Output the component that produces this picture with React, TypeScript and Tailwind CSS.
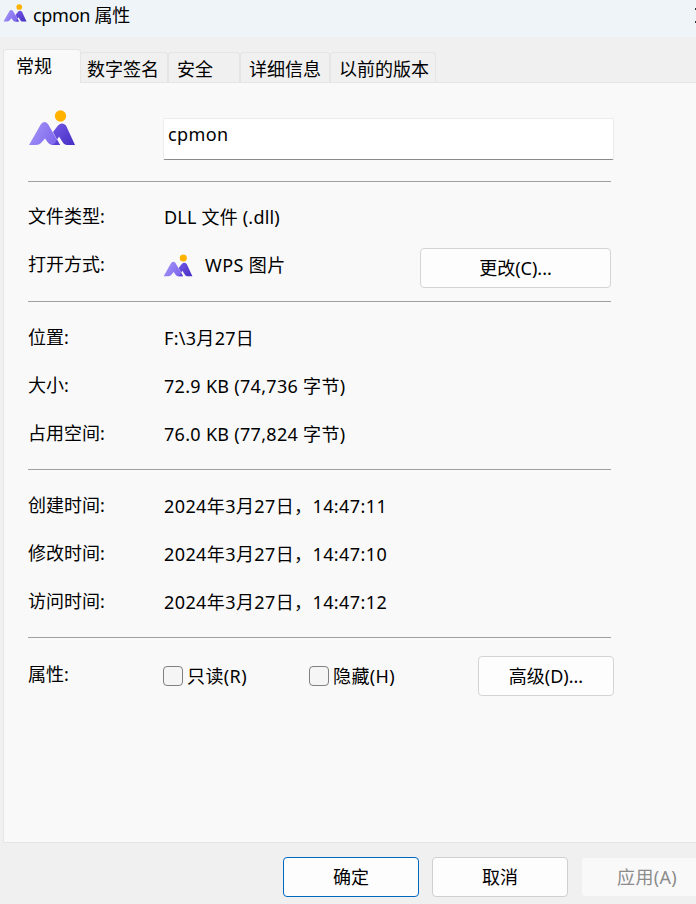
import React from 'react';

const fontClass = "font-['Noto_Sans','Noto_Sans_CJK_SC',sans-serif]";

function AppLogo({ className, id }: { className: string; id: string }): React.ReactElement {
  return (
    <svg viewBox="0 0 48 36" className={className}>
      <defs>
        <linearGradient id={`${id}Left`} x1="0" y1="0.2" x2="1" y2="0.6">
          <stop offset="0" stopColor="#a595f8" />
          <stop offset="1" stopColor="#7d66ec" />
        </linearGradient>
        <linearGradient id={`${id}Right`} x1="0" y1="0.1" x2="1" y2="0.9">
          <stop offset="0" stopColor="#7459e4" />
          <stop offset="1" stopColor="#4730c6" />
        </linearGradient>
      </defs>
      <path
        d="M1 35 L13 14 Q16.5 10 20 14 L32 35 L24 35 Q21.5 35 19.5 32 L17 28.5 L13 33 Q11 35 8 35 Z"
        fill={`url(#${id}Left)`}
      />
      <path
        d="M25 22 L30 15.5 Q34 11.5 38 15.5 L47 35 L38.5 35 Q36 35 34.5 32 L31 26.5 L27 33 Q25.5 35 23 35 L32 35 Z"
        fill={`url(#${id}Right)`}
      />
      <circle cx="32.5" cy="6" r="5.7" fill="#ffb300" />
    </svg>
  );
}

function Tab({ label, className }: { label: string; className: string }): React.ReactElement {
  return (
    <div className={`h-[31px] -mb-px pt-[3px] border border-[#e5e5e5] rounded-t-[3px] bg-[#f0f0f0] flex items-center ${className}`}>
      {label}
    </div>
  );
}

function Divider(): React.ReactElement {
  return <div className="h-px w-[583px] bg-[#a0a0a0]" />;
}

function InfoRow({ label, value, spacing = 'tracking-[0.3px]' }: { label: string; value: string; spacing?: string }): React.ReactElement {
  return (
    <div className="h-[48px] flex items-center">
      <div className="w-[136px] -mt-[2px]">{label}</div>
      <div className={`${spacing} -mt-px`}>{value}</div>
    </div>
  );
}

function Checkbox({ label, width }: { label: string; width: string }): React.ReactElement {
  return (
    <div className={`${width} flex items-center`}>
      <div className="w-[20px] h-[20px] rounded-[4px] border border-[#808080] bg-[#f5f5f5] mr-[5px]" />
      <span className="tracking-[0.4px] -ml-px">{label}</span>
    </div>
  );
}

function DialogButton({ label, className }: { label: string; className: string }): React.ReactElement {
  return (
    <div className={`h-[40px] rounded-[4px] flex items-center justify-center ${className}`}>
      {label}
    </div>
  );
}

export default function App(): React.ReactElement {
  return (
    <div className={`${fontClass} w-[696px] h-[904px] overflow-hidden bg-[#f0f0f0] text-[18px] leading-[24px] text-black`}>
      <div className="h-[37px] bg-[#eff4f9] flex items-start pl-[3px] gap-[6px] pt-[3px]">
        <AppLogo id="title" className="w-[24px] h-[18px] mt-px" />
        <span className="tracking-[-0.3px] flex-1">cpmon 属性</span>
        <svg viewBox="0 0 2 16" className="w-[2px] h-[16px] mt-[5px] shrink-0">
          <rect x="1" y="0" width="1" height="2" fill="#333333" />
          <rect x="1" y="13" width="1" height="2" fill="#333333" />
        </svg>
      </div>

      <div className="h-[45px] pl-[3px] flex items-end">
        <div className="relative z-10 w-[78px] h-[34px] -mb-px -mr-px pl-[12px] pb-[2px] border border-b-0 border-[#e5e5e5] rounded-t-[3px] bg-[#f9f9f9] flex items-center">
          常规
        </div>
        <Tab label="数字签名" className="w-[88px] pl-[6px]" />
        <Tab label="安全" className="w-[72px] pl-[8px]" />
        <Tab label="详细信息" className="w-[90px] pl-[8px]" />
        <Tab label="以前的版本" className="w-[106px] pl-[8px]" />
      </div>

      <div className="ml-[3px] h-[761px] border-t border-l border-b border-[#e5e5e5] bg-[#f9f9f9] pl-[24px]">
        <div className="h-[98px] pt-[27px] flex items-start">
          <AppLogo id="main" className="w-[48px] h-[36px] mr-[87px]" />
          <div className="w-[451px] h-[42px] mt-[8px] bg-white border border-[#ececec] border-b-[#8a8a8a] rounded-[2px] pl-[4px] pt-[3px] tracking-[0.4px]">
            cpmon
          </div>
        </div>
        <Divider />

        <div className="h-[11px]" />
        <InfoRow label="文件类型:" value="DLL 文件 (.dll)" spacing="tracking-[0.2px]" />
        <div className="h-[48px] flex items-center">
          <div className="w-[135px] -mt-[2px]">打开方式:</div>
          <AppLogo id="wps" className="w-[30px] h-[23px] mr-[12px]" />
          <div className="w-[215px] tracking-[0.4px]">WPS 图片</div>
          <DialogButton label="更改(C)..." className="w-[191px] mt-[6px] bg-[#fdfdfd] border border-[#d4d4d4]" />
        </div>
        <div className="h-[12px]" />
        <Divider />

        <div className="h-[12px]" />
        <InfoRow label="位置:" value="F:\3月27日" />
        <InfoRow label="大小:" value="72.9 KB (74,736 字节)" />
        <InfoRow label="占用空间:" value="76.0 KB (77,824 字节)" />
        <div className="h-[11px]" />
        <Divider />

        <div className="h-[12px]" />
        <InfoRow label="创建时间:" value="2024年3月27日，14:47:11" spacing="tracking-[0.4px]" />
        <InfoRow label="修改时间:" value="2024年3月27日，14:47:10" spacing="tracking-[0.4px]" />
        <InfoRow label="访问时间:" value="2024年3月27日，14:47:12" spacing="tracking-[0.4px]" />
        <div className="h-[11px]" />
        <Divider />

        <div className="h-[18px]" />
        <div className="h-[40px] flex items-center">
          <div className="w-[135px] -mt-[4px]">属性:</div>
          <Checkbox label="只读(R)" width="w-[146px]" />
          <Checkbox label="隐藏(H)" width="w-[169px]" />
          <DialogButton label="高级(D)..." className="w-[136px] bg-[#fdfdfd] border border-[#d4d4d4]" />
        </div>
      </div>

      <div className="pt-[14px] pl-[283px] flex gap-[13px]">
        <DialogButton label="确定" className="w-[136px] shrink-0 bg-[#fdfdfd] border border-[#0067c0]" />
        <DialogButton label="取消" className="w-[136px] shrink-0 bg-[#fdfdfd] border border-[#d0d0d0]" />
        <DialogButton label="应用(A)" className="w-[136px] shrink-0 pr-[4px] tracking-[0.3px] bg-[#f9f9f9] border border-[#f0f0f0] text-[#8c8c8c]" />
      </div>
    </div>
  );
}
